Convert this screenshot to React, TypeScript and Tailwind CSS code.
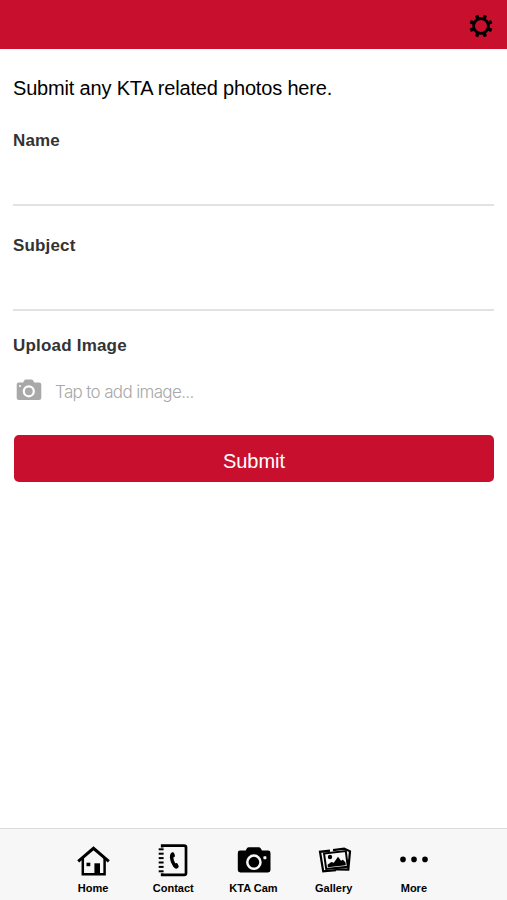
import { FormEvent, ReactNode, useState } from "react";

interface Tab {
  label: string;
  icon: ReactNode;
}

const GEAR_ANGLES = [22.5, 67.5, 112.5, 157.5, 202.5, 247.5, 292.5, 337.5];
const SPIRAL_ROWS = [7.3, 11.7, 16.1, 20.5, 24.9, 29.3];

function GearIcon() {
  return (
    <svg viewBox="-12 -12 24 24" className="size-6">
      <circle r="7.4" fill="none" stroke="#000" strokeWidth="2.8" />
      {GEAR_ANGLES.map((angle) => (
        <path
          key={angle}
          d="M-1.9 -8L-1.7 -11.6H1.7L1.9 -8Z"
          transform={`rotate(${angle})`}
        />
      ))}
    </svg>
  );
}

function UploadIcon() {
  return (
    <svg viewBox="0 0 26 22" className="h-[22px] w-[26px]">
      <path
        d="M2.5 3.4H7L8.5 1Q9 .4 9.8 .4H15.5Q16.3 .4 16.8 1L18.3 3.4H23Q25.3 3.4 25.3 5.7V19Q25.3 21 23 21H3Q.7 21 .7 19V5.4Q.7 3.4 2.5 3.4Z"
        fill="#a9a9a9"
      />
      <circle cx="12.8" cy="12.3" r="5" fill="none" stroke="#fff" strokeWidth="2.2" />
      <circle cx="4" cy="7" r="1" fill="#fff" />
    </svg>
  );
}

function HomeIcon() {
  return (
    <svg viewBox="0 0 36 36" className="size-9">
      <path d="M3.2 19.4L18.5 6.3L33.8 19.4" fill="none" stroke="#000" strokeWidth="3" />
      <path d="M7.8 16V32.3H29.6V16" fill="none" stroke="#000" strokeWidth="2.5" />
      <rect x="19.4" y="21.3" width="5.6" height="11.5" />
      <rect x="11.5" y="20.7" width="3.8" height="3.5" />
    </svg>
  );
}

function ContactIcon() {
  return (
    <svg viewBox="0 0 36 36" className="size-9">
      <path
        d="M7.2 5.4V3.6H29.1Q31 3.6 31 5.5V31Q31 32.9 29.1 32.9H7.2V31.2"
        fill="none"
        stroke="#000"
        strokeWidth="2.7"
      />
      {SPIRAL_ROWS.map((y) => (
        <rect key={y} x="3.7" y={y - 1} width="4.9" height="2" />
      ))}
      <path d="M17.2 10.3Q18.6 9.9 19.2 11.2L20 13.7Q20.2 14.9 18.4 15.6Q18.4 18.4 20.2 21.3Q22 20.7 22.6 21.7L23.7 24Q24 25.2 22.5 26.3Q20.6 27.5 18.3 24.7Q15.2 20.8 14.9 15.8Q14.8 11.2 17.2 10.3Z" />
    </svg>
  );
}

function CameraIcon() {
  return (
    <svg viewBox="0 0 36 36" className="size-9">
      <path d="M4 8.6H9.6L11 6.3Q11.6 5.3 12.8 5.3H22.8Q24 5.3 24.6 6.3L26 8.6H32Q34.5 8.6 34.5 11V28Q34.5 30.4 32 30.4H4.3Q1.8 30.4 1.8 28V11Q1.8 8.6 4 8.6Z" />
      <circle cx="17.9" cy="20.2" r="6.6" fill="none" stroke="#f7f7f7" strokeWidth="2.5" />
      <rect x="27.4" y="14.2" width="3" height="3" rx=".6" fill="#f7f7f7" />
    </svg>
  );
}

function GalleryIcon() {
  return (
    <svg viewBox="0 0 36 36" className="size-9">
      <path
        d="M17 8.2L28.2 6.6L34 9.3L32.3 27.6L20 27.4"
        fill="none"
        stroke="#000"
        strokeWidth="2.2"
      />
      <path
        d="M14 8.6L4 9.8L7.2 29.4L20 28.2"
        fill="none"
        stroke="#000"
        strokeWidth="2.2"
      />
      <path d="M8 11.4L29.8 9L31.8 24.8L10.2 27Z" fill="#f7f7f7" stroke="#000" strokeWidth="2" />
      <circle cx="14" cy="15" r="2.2" />
      <path d="M11.8 25.2L11.6 22.8L15.3 20.1L17.8 20.7L22 14.8L25 18.8L27 17.8L29.5 20.6L29.8 23.2Z" />
    </svg>
  );
}

function MoreIcon() {
  return (
    <svg viewBox="0 0 36 36" className="size-9">
      <circle cx="7" cy="17.4" r="2.8" />
      <circle cx="18" cy="17.4" r="2.8" />
      <circle cx="29" cy="17.4" r="2.8" />
    </svg>
  );
}

const tabs: Tab[] = [
  { label: "Home", icon: <HomeIcon /> },
  { label: "Contact", icon: <ContactIcon /> },
  { label: "KTA Cam", icon: <CameraIcon /> },
  { label: "Gallery", icon: <GalleryIcon /> },
  { label: "More", icon: <MoreIcon /> },
];

interface FieldProps {
  label: string;
  value: string;
  onChange: (value: string) => void;
}

function Field({ label, value, onChange }: FieldProps) {
  return (
    <label className="block h-[105px]">
      <span className="block text-[17px] leading-6 font-bold tracking-[0.15px] text-[#333]">
        {label}
      </span>
      <input
        value={value}
        onChange={(e) => onChange(e.target.value)}
        className="block h-[53px] w-full border-b-2 border-[#e2e2e2] bg-transparent text-lg focus:outline-none"
      />
    </label>
  );
}

export default function App() {
  const [name, setName] = useState("");
  const [subject, setSubject] = useState("");

  const handleSubmit = (e: FormEvent) => {
    e.preventDefault();
    setName("");
    setSubject("");
  };

  return (
    <div className="flex h-screen flex-col bg-white font-['Liberation_Sans',Arial,sans-serif]">
      <header className="flex h-[49px] shrink-0 items-center justify-end bg-[#c8102e] pt-0.5 pr-3.5">
        <button aria-label="Settings">
          <GearIcon />
        </button>
      </header>
      <form onSubmit={handleSubmit} className="flex-1 px-[13px] pt-[27px]">
        <p className="mb-[41px] h-[12px] text-[20px] leading-6 tracking-[-0.18px] text-black">
          Submit any KTA related photos here.
        </p>
        <Field label="Name" value={name} onChange={setName} />
        <Field label="Subject" value={subject} onChange={setSubject} />
        <p className="-mt-[5px] text-[17px] leading-6 font-bold tracking-[0.2px] text-[#333]">
          Upload Image
        </p>
        <button type="button" className="mt-5 flex h-6 items-center gap-[13px] pl-[3px]">
          <UploadIcon />
          <span className="pt-[5px] font-['Inter',sans-serif] text-[17px] font-light tracking-[-0.65px] text-[#a8a8a8]">
            Tap to add image...
          </span>
        </button>
        <button
          type="submit"
          className="mx-px mt-[33px] block h-[47px] w-[480px] rounded-[5px] bg-[#c8102e] pt-1 text-[20px] text-white"
        >
          Submit
        </button>
      </form>
      <nav className="flex h-[72px] shrink-0 justify-center border-t border-[#dcdcdc] bg-[#f7f7f7] pt-[13px]">
        {tabs.map((tab) => (
          <button key={tab.label} className="flex w-[80.2px] flex-col items-center">
            {tab.icon}
            <span className="mt-0.5 text-[11px] leading-4 font-bold text-black">
              {tab.label}
            </span>
          </button>
        ))}
      </nav>
    </div>
  );
}
